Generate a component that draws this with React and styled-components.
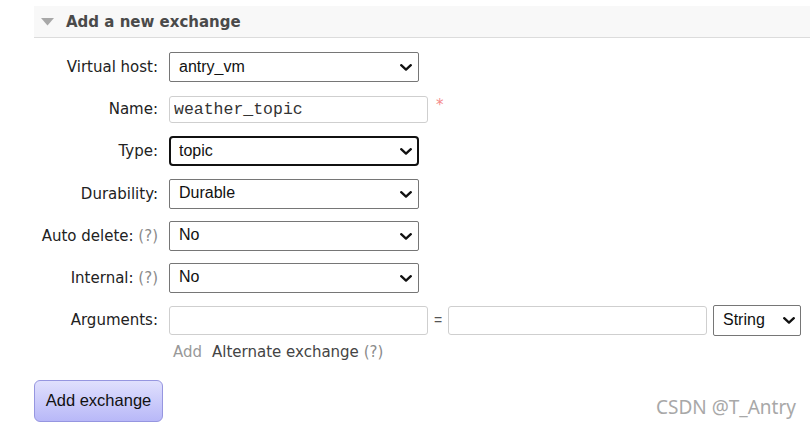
import React from "react";
import styled, { createGlobalStyle } from "styled-components";

const Global = createGlobalStyle`
  html, body { margin: 0; padding: 0; background: #fff; }
  body { font-family: "DejaVu Sans", Verdana, sans-serif; color: #222; width: 810px; height: 429px; overflow: hidden; }
  * { box-sizing: border-box; }
`;

const Page = styled.div`
  position: relative;
  width: 810px;
  height: 429px;
  padding-top: 6px;
`;

const Header = styled.div`
  margin-left: 34px;
  height: 32px;
  background: #f8f8f8;
  border-bottom: 1px solid #dcdcdc;
  display: flex;
  align-items: center;
  padding-left: 7px;
  gap: 12px;
`;

const Title = styled.h2`
  margin: 0;
  font-family: "DejaVu Sans", Verdana, sans-serif;
  font-weight: bold;
  font-size: 15px;
  color: #4a4a4a;
`;

const Form = styled.div`
  display: grid;
  grid-template-columns: 158px auto;
  grid-template-rows: repeat(7, 30px) auto;
  column-gap: 11px;
  row-gap: 12.2px;
  margin-top: 14px;
  align-items: center;
`;

const Label = styled.label`
  justify-self: end;
  font-size: 15px;
  color: #222;
  white-space: nowrap;
`;

const Help = styled.span`
  color: #8a8a8a;
`;

const Cell = styled.div`
  display: flex;
  align-items: center;
`;

const SelectWrap = styled.div`
  position: relative;
  width: ${(p) => p.$w}px;
  height: ${(p) => p.$h || 30}px;
  margin-left: ${(p) => p.$ml || 0}px;
`;

const Select = styled.select`
  appearance: none;
  -webkit-appearance: none;
  width: 100%;
  height: 100%;
  margin: 0;
  padding: 0 0 2px ${(p) => (p.$focused ? 8 : 9)}px;
  font-family: "Liberation Sans", Arial, sans-serif;
  font-size: 16px;
  color: #111;
  background: #fff;
  border: ${(p) => (p.$focused ? "2px solid #111" : "1px solid #767676")};
  border-radius: ${(p) => (p.$focused ? 4 : 2)}px;
  outline: none;
`;

const Chevron = styled.svg`
  position: absolute;
  right: ${(p) => p.$r || 7}px;
  top: 50%;
  margin-top: -3px;
  width: 12px;
  height: 7px;
  pointer-events: none;
`;

const TextInput = styled.input`
  width: 259px;
  height: ${(p) => p.$h || 27}px;
  margin: 0;
  padding: 0 0 0 4px;
  border: 1px solid #cfcfcf;
  border-radius: 3px;
  font-family: "Liberation Mono", "Courier New", monospace;
  font-size: 16.5px;
  color: #333;
  background: #fff;
  outline: none;
`;

const Required = styled.span`
  color: #f48a8a;
  font-size: 15px;
  margin-left: 8px;
  margin-top: -8px;
`;

const Equals = styled.span`
  font-family: "Liberation Sans", Arial, sans-serif;
  font-size: 14px;
  color: #555;
  width: 20px;
  text-align: center;
`;

const AltRow = styled.div`
  grid-column: 2;
  align-self: start;
  font-size: 15px;
  margin-top: -6px;
  height: 22px;
  display: flex;
  align-items: center;
  gap: 10px;
  padding-left: 4px;
`;

const Muted = styled.span`
  color: #999;
`;

const AltText = styled.span`
  color: #444;
`;

const Button = styled.button`
  margin: 17px 0 0 34px;
  width: 129px;
  height: 42px;
  padding: 0 0 2px;
  font-family: "Liberation Sans", Arial, sans-serif;
  font-size: 16.5px;
  color: #111;
  background: linear-gradient(to bottom, #e0e0fd, #b8b8f8);
  border: 1px solid #9696e0;
  border-radius: 6px;
`;

const Watermark = styled.div`
  position: absolute;
  right: 14px;
  bottom: 9px;
  font-family: "Noto Sans", "Noto Sans CJK SC", sans-serif;
  font-size: 19px;
  color: #a8a8a8;
`;

const Chev = ({ r }) => (
  <Chevron $r={r} viewBox="0 0 12 7">
    <path d="M1.2 1.2 L6 5.6 L10.8 1.2" fill="none" stroke="#111" strokeWidth="2.3" strokeLinecap="round" strokeLinejoin="round" />
  </Chevron>
);

const DropDown = ({ value, w = 250, h, focused, r, ml }) => (
  <SelectWrap $w={w} $h={h} $ml={ml}>
    <Select $focused={focused} defaultValue={value}>
      <option>{value}</option>
    </Select>
    <Chev r={r} />
  </SelectWrap>
);

export default function App() {
  return (
    <Page>
      <Global />
      <Header>
        <svg width="13" height="8" viewBox="0 0 13 8">
          <polygon points="0,0 13,0 6.5,7.5" fill="#a8a8a8" />
        </svg>
        <Title>Add a new exchange</Title>
      </Header>
      <Form>
        <Label>Virtual host:</Label>
        <DropDown value="antry_vm" />

        <Label>Name:</Label>
        <Cell>
          <TextInput defaultValue="weather_topic" />
          <Required>*</Required>
        </Cell>

        <Label>Type:</Label>
        <DropDown value="topic" focused />

        <Label>Durability:</Label>
        <DropDown value="Durable" />

        <Label>
          Auto delete: <Help>(?)</Help>
        </Label>
        <DropDown value="No" />

        <Label>
          Internal: <Help>(?)</Help>
        </Label>
        <DropDown value="No" />

        <Label>Arguments:</Label>
        <Cell>
          <TextInput $h={29} />
          <Equals>=</Equals>
          <TextInput $h={29} />
          <DropDown value="String" w={88} h={31} r={6} ml={6} />
        </Cell>

        <AltRow>
          <Muted>Add</Muted>
          <AltText>
            Alternate exchange <Help>(?)</Help>
          </AltText>
        </AltRow>
      </Form>
      <Button>Add exchange</Button>
      <Watermark>CSDN @T_Antry</Watermark>
    </Page>
  );
}
